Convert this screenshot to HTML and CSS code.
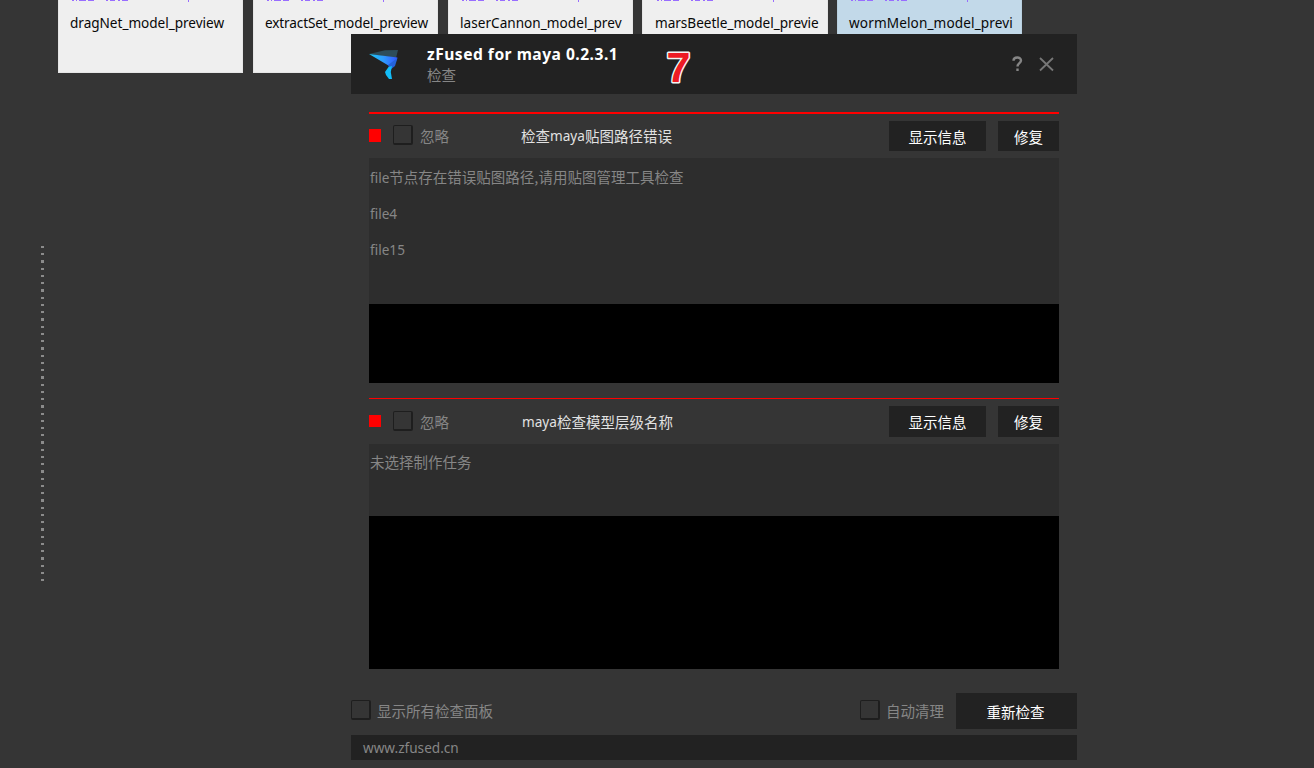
FILE: index.html
```
<!DOCTYPE html>
<html lang="zh-CN">
<head>
<meta charset="utf-8">
<title>zFused for maya</title>
<link rel="stylesheet" href="styles.css">
</head>
<body>
<main class="desktop">
  <section class="cards">
    <article class="card"><svg class="tag" width="140" height="2"><path d="M2 0h2v1H2zM6 0h1v1H6zM9 0h7v1H9zM18 0h6v1H18zM36 0h2v1h-2zM40 0h5v1h-5zM48 0h2v1h-2zM52 0h6v1h-6zM118 0h1v2h-1z"/></svg><span class="name">dragNet_model_preview</span></article>
    <article class="card"><svg class="tag" width="140" height="2"><path d="M2 0h2v1H2zM6 0h1v1H6zM9 0h7v1H9zM18 0h6v1H18zM36 0h2v1h-2zM40 0h5v1h-5zM48 0h2v1h-2zM52 0h6v1h-6zM118 0h1v2h-1z"/></svg><span class="name">extractSet_model_preview</span></article>
    <article class="card"><svg class="tag" width="140" height="2"><path d="M2 0h2v1H2zM6 0h1v1H6zM9 0h7v1H9zM18 0h6v1H18zM36 0h2v1h-2zM40 0h5v1h-5zM48 0h2v1h-2zM52 0h6v1h-6zM118 0h1v2h-1z"/></svg><span class="name">laserCannon_model_prev</span></article>
    <article class="card wide"><svg class="tag" width="140" height="2"><path d="M2 0h2v1H2zM6 0h1v1H6zM9 0h7v1H9zM18 0h6v1H18zM36 0h2v1h-2zM40 0h5v1h-5zM48 0h2v1h-2zM52 0h6v1h-6zM118 0h1v2h-1z"/></svg><span class="name">marsBeetle_model_previe</span></article>
    <article class="card selected"><svg class="tag" width="140" height="2"><path d="M2 0h2v1H2zM6 0h1v1H6zM9 0h7v1H9zM18 0h6v1H18zM36 0h2v1h-2zM40 0h5v1h-5zM48 0h2v1h-2zM52 0h6v1h-6zM118 0h1v2h-1z"/></svg><span class="name">wormMelon_model_previ</span></article>
  </section>
  <div class="splitter"></div>

  <section class="window">
    <header class="titlebar">
      <svg class="logo" width="30" height="30" viewBox="0 0 30 30">
        <defs><linearGradient id="wing" x1="0" y1="0" x2="1" y2="0"><stop offset="0" stop-color="#1cc8f5"/><stop offset=".5" stop-color="#2f9dff"/><stop offset="1" stop-color="#3355ff"/></linearGradient></defs>
        <path d="M0 5 16 1.2 29 1 27 9z" fill="#2d4d5a"/>
        <path d="M0 5 28.5 8.5 26 14 19 16.2z" fill="url(#wing)"/>
        <path d="M28.5 9 26 17 21 21 19 16z" fill="#2463dc"/>
        <path d="M19.5 18 16 23 17 26 20 30H23L21.800 23 23 17z" fill="#13bdf8"/>
      </svg>
      <div class="titles"><h1>zFused for maya 0.2.3.1</h1><p>检查</p></div>
      <svg class="seven" width="34" height="44" viewBox="0 0 34 44"><text x="3.5" y="37.500">7</text></svg>
      <svg class="controls" width="44" height="16" viewBox="0 0 44 16">
        <path class="question" d="M2.500 4.8C2.500 .6 10 .3 10 4.5 10 7.3 6.500 7 6.500 10.500M6.500 12.400V15"/>
        <path class="close" d="m29 2 13 12.500M42 2 29 14.500"/>
      </svg>
    </header>

    <section class="check first">
      <div class="check-head"><i class="status"></i><i class="box"></i><span class="ignore">忽略</span><h2><span>检查</span><span class="latin">maya</span><span>贴图路径错误</span></h2><button class="info">显示信息</button><button class="fix">修复</button></div>
      <div class="message"><p><span class="latin">file</span>节点存在错误贴图路径<span class="comma">,</span>请用贴图管理工具检查</p><p class="latin">file4</p><p class="latin">file15</p></div>
    </section>
    <section class="check second">
      <div class="check-head"><i class="status"></i><i class="box"></i><span class="ignore">忽略</span><h2><span class="latin">maya</span><span>检查模型层级名称</span></h2><button class="info">显示信息</button><button class="fix">修复</button></div>
      <div class="message"><p>未选择制作任务</p></div>
    </section>

    <div class="actions"><i class="box"></i><span>显示所有检查面板</span><i class="box auto"></i><span>自动清理</span><button class="recheck">重新检查</button></div>
    <footer>www.zfused.cn</footer>
  </section>
</main>
</body>
</html>
```
FILE: styles.css
```
* { box-sizing: border-box; }
body {
  margin: 0;
  background: #353535;
  color: #868686;
  font: 400 14.5px/20px "Noto Sans CJK SC", sans-serif;
}
h1, h2, p { margin: 0; font-weight: inherit; }
.desktop { position: relative; width: 1314px; height: 768px; overflow: hidden; }

.cards { display: flex; gap: 10px; padding-left: 58px; height: 73px; }
.card { width: 185px; border: 1px solid #e5e5e5; border-top: 0; background: #efefef; padding: 0 11px; overflow: hidden; }
.card.wide { width: 186px; margin-left: -1px; padding-left: 12px; }
.card.selected { margin-left: -1px; background: #c2d9e9; border-color: #b9d0df; }
.tag { display: block; fill: #986dff; }
.name { display: block; margin-top: 11px; white-space: nowrap; color: #080808; font: 400 13.6px/20px "Noto Sans", sans-serif; letter-spacing: -.03px; }
.card:nth-child(2) .name { letter-spacing: -.13px; }
.card:nth-child(3) .name { letter-spacing: .02px; }
.selected .name { letter-spacing: .12px; }
.splitter { width: 3px; height: 336px; margin: 173px 0 0 41px; background: repeating-linear-gradient(#8b8b8b 0 2.25px, transparent 2.25px 7.24px); }

.window { position: absolute; left: 351px; top: 34px; width: 726px; display: flex; flex-direction: column; background: #353535; }
.titlebar { display: flex; height: 60px; background: #222; padding: 15px 22px 0 18px; }
.titles { width: 240px; margin-left: 28px; margin-top: -5px; }
.titles h1 { height: 21px; color: #fff; font: 700 15.6px/21px "Noto Sans", sans-serif; letter-spacing: .49px; white-space: nowrap; }
.seven { margin: -5px 0 0 -4px; overflow: visible; }
.seven text { font: 700 43px/1 "Liberation Sans", sans-serif; fill: #ee1b24; stroke: #f4f4f4; stroke-width: 3px; paint-order: stroke; stroke-linejoin: round; }
.controls { margin: 7px 0 0 auto; fill: none; stroke: #858585; }
.question { stroke-width: 2.4px; }
.close { stroke-width: 1.8px; stroke: #777; }

.check { width: 690px; margin-left: 18px; background: #000; }
.first { height: 271px; margin-top: 18px; }
.second { height: 271px; margin-top: 15px; }
.check-head { display: flex; align-items: center; height: 46px; border-top: 2px solid #f00; background: #353535; }
.second .check-head { border-top-width: 1px; }
.status { width: 12px; height: 13px; margin-top: -2px; background: #f00; }
.second .status { height: 12px; }
.box { width: 20px; height: 20px; border: 1px solid #1e1e1e; border-width: 1px 2px 2px 1px; border-radius: 2px; background: #353535; flex: none; }
.check-head .box { margin: -2px 7px 0 12px; }
.ignore { width: 101px; }
h2 { display: flex; width: 368px; font-size: 14.5px; color: #e2e2e2; white-space: nowrap; }
.second h2 { padding-left: 1px; }
.latin { font-family: "Noto Sans", sans-serif; font-size: 13.6px; }
button { border: 0; border-radius: 0; padding: 1px 0 0; background: #222; color: #fff; font: 400 14.5px/20px "Noto Sans CJK SC", sans-serif; }
.info { width: 97px; height: 30px; }
.fix { width: 61px; height: 30px; margin-left: 12px; }
.second button { height: 31px; }
.message { height: 146px; padding: 10px 1px; background: #2d2d2d; }
.message p { height: 20px; margin-bottom: 16px; white-space: nowrap; }
.message p:first-child { position: relative; top: -1px; }
.second .message { height: 72px; padding-top: 9px; }
.actions { display: flex; align-items: center; height: 36px; margin-top: 24px; }
.actions span { margin-left: 6px; }
.actions .box { margin-top: -3px; }
.actions .auto { margin-left: auto; }
.recheck { width: 121px; height: 36px; margin-left: 12px; padding: 2px 2px 0 0; }
footer { height: 25px; margin-top: 6px; padding: 2px 12px; background: #222; font: 400 13.6px/21px "Noto Sans", sans-serif; }
```
